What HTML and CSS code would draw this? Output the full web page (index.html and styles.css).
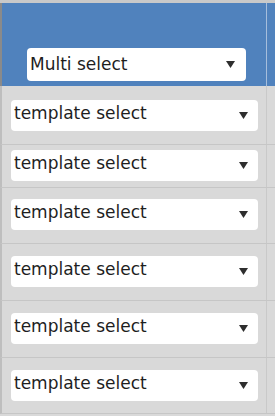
FILE: index.html
```html
<!doctype html>
<html>
<head lang="en">
	<meta charset="UTF-8">
	<meta name="viewport" content="width=device-width, initial-scale=1">
	<title>Select list</title>
	<link rel="stylesheet" href="styles.css">
</head>
<body>

<svg style="display:none" xmlns="http://www.w3.org/2000/svg">
	<symbol id="icon-caret" viewBox="0 0 9 7">
		<path d="M0 0h9L4.5 7z"/>
	</symbol>
</svg>

<div class="sheet">
	<div class="sheet__row sheet__row--head">
		<div class="sheet__cell">
			<div class="pick pick--multi">
				<span class="pick__label">Multi select</span>
				<svg class="pick__arrow"><use xlink:href="#icon-caret"></use></svg>
			</div>
		</div>
		<div class="sheet__side"></div>
	</div>

	<div class="sheet__row sheet__row--first">
		<div class="sheet__cell">
			<div class="pick">
				<span class="pick__label">template select</span>
				<svg class="pick__arrow"><use xlink:href="#icon-caret"></use></svg>
			</div>
		</div>
		<div class="sheet__side"></div>
	</div>

	<div class="sheet__row sheet__row--tight">
		<div class="sheet__cell">
			<div class="pick">
				<span class="pick__label">template select</span>
				<svg class="pick__arrow"><use xlink:href="#icon-caret"></use></svg>
			</div>
		</div>
		<div class="sheet__side"></div>
	</div>

	<div class="sheet__row sheet__row--third">
		<div class="sheet__cell">
			<div class="pick">
				<span class="pick__label">template select</span>
				<svg class="pick__arrow"><use xlink:href="#icon-caret"></use></svg>
			</div>
		</div>
		<div class="sheet__side"></div>
	</div>

	<div class="sheet__row">
		<div class="sheet__cell">
			<div class="pick">
				<span class="pick__label">template select</span>
				<svg class="pick__arrow"><use xlink:href="#icon-caret"></use></svg>
			</div>
		</div>
		<div class="sheet__side"></div>
	</div>

	<div class="sheet__row">
		<div class="sheet__cell">
			<div class="pick">
				<span class="pick__label">template select</span>
				<svg class="pick__arrow"><use xlink:href="#icon-caret"></use></svg>
			</div>
		</div>
		<div class="sheet__side"></div>
	</div>

	<div class="sheet__row sheet__row--last">
		<div class="sheet__cell">
			<div class="pick">
				<span class="pick__label">template select</span>
				<svg class="pick__arrow"><use xlink:href="#icon-caret"></use></svg>
			</div>
		</div>
		<div class="sheet__side"></div>
	</div>
</div>

</body>
</html>
```

FILE: styles.css
```css
* {
	margin: 0;
	padding: 0;
	box-sizing: border-box;
}
body {
	color: #1e1e1e;
	background-color: #d9d9d9;
	font-family: 'DejaVu Sans', Verdana, sans-serif;
	font-size: 17px;
	line-height: 20px;
	border-top: 3px solid #c9c9c9;
	min-height: 416px;
}
.sheet__row {
	display: flex;
	border-left: 2px solid #bebebe;
	border-bottom: 1px solid #c6c6c6;
}
.sheet__row--head {
	height: 83px;
	background-color: #5082bd;
	border-left-color: #8a8a8a;
	border-bottom: none;
}
.sheet__cell {
	width: 265px;
	padding: 12px 8px 13px 9px;
	border-right: 1px solid #c9c9c9;
}
.sheet__row--head .sheet__cell {
	padding: 45px 20px 0 25px;
	border-right-color: #a6bedc;
}
.sheet__row--first .sheet__cell {
	padding-top: 14px;
}
.sheet__row--tight .sheet__cell {
	padding-top: 5px;
	padding-bottom: 6px;
}
.sheet__row--third .sheet__cell {
	padding-top: 11px;
}
.sheet__row--last .sheet__cell {
	padding-bottom: 12px;
}
.sheet__side {
	flex: 1;
}
.pick {
	display: flex;
	align-items: center;
	justify-content: space-between;
	height: 31px;
	padding: 0 10px 0 3px;
	background-color: #fff;
	border-radius: 4px;
}
.pick__label {
	align-self: flex-start;
	margin-top: 3px;
	white-space: nowrap;
}
.pick--multi {
	height: 33px;
	padding-right: 11px;
}
.pick--multi .pick__label {
	align-self: center;
	margin-top: 0;
	margin-bottom: 2px;
}
.pick__arrow {
	width: 9px;
	height: 7px;
	fill: #2e2e2e;
	flex: none;
}
```
